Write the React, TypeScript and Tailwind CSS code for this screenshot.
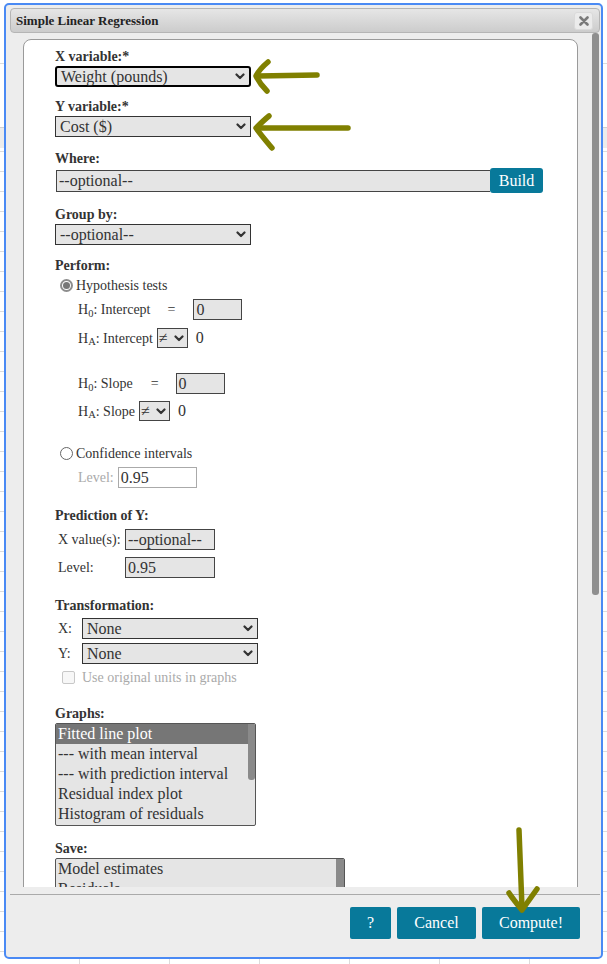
import React from "react";

function Chevron() {
  return (
    <svg width="10" height="7" viewBox="0 0 10 7" className="shrink-0">
      <path d="M1.5 1.5 L5 5 L8.5 1.5" fill="none" stroke="#333" strokeWidth="2.2" strokeLinecap="round" strokeLinejoin="round" />
    </svg>
  );
}

function Sel({ value, className }: { value: string; className: string }) {
  return (
    <div className={`flex items-center justify-between bg-[#e5e5e5] text-[16px] leading-[18px] text-[#333] pl-[4px] pr-[4px] ${className}`}>
      <span className="whitespace-nowrap">{value}</span>
      <Chevron />
    </div>
  );
}

function Label({ children, className = "" }: { children: React.ReactNode; className?: string }) {
  return <div className={`h-[16px] leading-[16px] text-[14px] font-bold text-[#333] ${className}`}>{children}</div>;
}

function Box({ value, className }: { value: string; className: string }) {
  return (
    <div className={`h-[21px] border bg-[#e5e5e5] border-[#444] text-[16px] leading-[19px] text-[#333] pl-[2px] whitespace-nowrap ${className}`}>
      {value}
    </div>
  );
}

function H({ s }: { s: string }) {
  return (
    <span>
      H<sub className="text-[10.5px]">{s}</sub>:
    </span>
  );
}

function NeqSel({ className }: { className: string }) {
  return (
    <div className={`flex items-center justify-between w-[31px] h-[20px] border border-[#444] bg-[#e5e5e5] text-[16px] text-[#333] pl-[1px] pr-[3px] ${className}`}>
      <span>≠</span>
      <Chevron />
    </div>
  );
}

function Radio({ checked }: { checked: boolean }) {
  return checked ? (
    <div className="w-[13px] h-[13px] rounded-full border-2 border-[#8d8d8d] bg-white flex items-center justify-center">
      <div className="w-[7px] h-[7px] rounded-full bg-[#777]" />
    </div>
  ) : (
    <div className="w-[13px] h-[13px] rounded-full border border-[#666] bg-white" />
  );
}

function Btn({ children, className = "" }: { children: React.ReactNode; className?: string }) {
  return (
    <div className={`h-[32px] flex items-center justify-center bg-[#08799a] text-white text-[16px] rounded-[2px] ${className}`}>
      {children}
    </div>
  );
}

export default function App() {
  return (
    <div className="relative w-[607px] h-[964px] overflow-hidden bg-white font-['Liberation_Serif','Times_New_Roman',serif]">
      {/* background page */}
      <div className="flex flex-col h-full">
        <div className="h-[64px] border-b border-[#dcdcdc]" />
        <div className="h-[64px] border-b border-[#d0d0d0]" />
        <div className="h-[20px] bg-[#ececec]" />
        <div className="flex-1 bg-[repeating-linear-gradient(180deg,transparent_0_3px,#dcdcdc_3px_4px,transparent_4px_20px)]">
          <div className="h-full bg-[repeating-linear-gradient(90deg,transparent_0_79px,#dcdcdc_79px_80px,transparent_80px_90px)]" />
        </div>
      </div>

      {/* dialog */}
      <div className="absolute left-[4px] top-[3px] w-[599px] h-[956px] border-2 border-[#4a8af4] rounded-[5px] bg-[#ededed] flex flex-col">
        {/* title bar */}
        <div className="mt-[3px] ml-[4px] mr-[1px] h-[25px] shrink-0 flex items-center justify-between border border-[#b5b5b5] rounded-[4px] bg-linear-to-b from-[#e6e6e6] to-[#cccccc] pl-[5px]">
          <span className="text-[13px] font-bold text-[#222]">Simple Linear Regression</span>
          <div className="mr-[6px] w-[19px] h-[18px] rounded-[3px] bg-[#ebebeb] border border-[#dadada] flex items-center justify-center">
            <svg width="10" height="10" viewBox="0 0 10 10">
              <path d="M1.5 1.5 L8.5 8.5 M8.5 1.5 L1.5 8.5" stroke="#7a7a7a" strokeWidth="2.6" strokeLinecap="round" />
            </svg>
          </div>
        </div>

        {/* scroll area */}
        <div className="relative h-[854px] shrink-0 overflow-hidden">
          <div className="absolute right-[2px] top-0 w-[7px] h-[562px] rounded-[3px] bg-[#8f8f8f]" />
          <div className="ml-[17px] mt-[6px] w-[555px] h-[1300px] border border-[#9a9a9a] rounded-t-[8px] bg-white pl-[31px] pt-[9px] text-[#333]">
            <Label>X variable:*</Label>
            <Sel value="Weight (pounds)" className="mt-[1px] w-[196px] h-[21px] border-2 border-black rounded-[3px]" />

            <Label className="mt-[12px]">Y variable:*</Label>
            <Sel value="Cost ($)" className="mt-[1px] w-[196px] h-[21px] border border-[#333]" />

            <Label className="mt-[14px]">Where:</Label>
            <div className="mt-[1px] flex items-center h-[25px]">
              <Box value="--optional--" className="ml-[1px] w-[434px] h-[22px] border-r-0" />
              <Btn className="w-[53px] !h-[25px] rounded-[3px]">Build</Btn>
            </div>

            <Label className="mt-[14px]">Group by:</Label>
            <Sel value="--optional--" className="mt-[1px] w-[196px] h-[21px] border border-[#333]" />

            <Label className="mt-[13px]">Perform:</Label>
            <div className="mt-[3px] h-[16px] flex items-center text-[14px] ml-[5px]">
              <Radio checked />
              <span className="ml-[3px]">Hypothesis tests</span>
            </div>

            <div className="mt-[6px] ml-[23px] h-[21px] flex items-center text-[14px]">
              <H s="0" />
              <span className="ml-[3.5px]">Intercept</span>
              <span className="ml-[17px]">=</span>
              <Box value="0" className="ml-[18px] w-[49px]" />
            </div>
            <div className="mt-[8px] ml-[23px] h-[20px] flex items-center text-[14px]">
              <H s="A" />
              <span className="ml-[3.5px]">Intercept</span>
              <NeqSel className="ml-[4px]" />
              <span className="ml-[8px] text-[16px]">0</span>
            </div>

            <div className="mt-[25px] ml-[23px] h-[21px] flex items-center text-[14px]">
              <H s="0" />
              <span className="ml-[3.5px]">Slope</span>
              <span className="ml-[18px]">=</span>
              <Box value="0" className="ml-[17px] w-[49px]" />
            </div>
            <div className="mt-[7px] ml-[23px] h-[20px] flex items-center text-[14px]">
              <H s="A" />
              <span className="ml-[3.5px]">Slope</span>
              <NeqSel className="ml-[4px]" />
              <span className="ml-[8px] text-[16px]">0</span>
            </div>

            <div className="mt-[24px] h-[16px] flex items-center text-[14px] ml-[5px]">
              <Radio checked={false} />
              <span className="ml-[3px]">Confidence intervals</span>
            </div>
            <div className="mt-[6px] ml-[23px] h-[21px] flex items-center text-[14px]">
              <span className="text-[#aaa]">Level:</span>
              <div className="ml-[4px] w-[79px] h-[21px] border border-[#aaa] bg-white text-[16px] leading-[19px] pl-[2px]">0.95</div>
            </div>

            <Label className="mt-[20px]">Prediction of Y:</Label>
            <div className="mt-[5px] ml-[3px] h-[21px] flex items-center text-[14px]">
              <span className="w-[67px]">X value(s):</span>
              <Box value="--optional--" className="w-[90px]" />
            </div>
            <div className="mt-[7px] ml-[3px] h-[21px] flex items-center text-[14px]">
              <span className="w-[67px]">Level:</span>
              <Box value="0.95" className="w-[90px]" />
            </div>

            <Label className="mt-[20px]">Transformation:</Label>
            <div className="mt-[4px] ml-[3px] h-[21px] flex items-center text-[14px]">
              <span className="w-[24px]">X:</span>
              <Sel value="None" className="w-[176px] h-[21px] border border-[#333]" />
            </div>
            <div className="mt-[4px] ml-[3px] h-[21px] flex items-center text-[14px]">
              <span className="w-[24px]">Y:</span>
              <Sel value="None" className="w-[176px] h-[21px] border border-[#333]" />
            </div>
            <div className="mt-[5px] ml-[7px] h-[16px] flex items-center text-[14px] text-[#aaa]">
              <div className="w-[13px] h-[13px] rounded-[2px] border border-[#c8c8c8] bg-[#f7f7f7]" />
              <span className="ml-[7px]">Use original units in graphs</span>
            </div>

            <Label className="mt-[21px]">Graphs:</Label>
            <div className="mt-[1px] w-[201px] h-[103px] border border-[#555] rounded-[2px] bg-[#e5e5e5] flex overflow-hidden">
              <div className="flex-1 text-[16px] leading-[20px]">
                <div className="h-[20px] bg-[#767676] text-white pl-[2px] whitespace-nowrap">Fitted line plot</div>
                <div className="h-[20px] pl-[2px] whitespace-nowrap">--- with mean interval</div>
                <div className="h-[20px] pl-[2px] whitespace-nowrap">--- with prediction interval</div>
                <div className="h-[20px] pl-[2px] whitespace-nowrap">Residual index plot</div>
                <div className="h-[20px] pl-[2px] whitespace-nowrap">Histogram of residuals</div>
              </div>
              <div className="w-[7px] shrink-0">
                <div className="h-[56px] rounded-b-[3px] bg-[#8a8a8a]" />
              </div>
            </div>

            <Label className="mt-[15px]">Save:</Label>
            <div className="mt-[1px] w-[290px] h-[103px] border border-[#555] rounded-[2px] bg-[#e5e5e5] flex overflow-hidden">
              <div className="flex-1 text-[16px] leading-[20px]">
                <div className="h-[20px] pl-[2px] whitespace-nowrap">Model estimates</div>
                <div className="h-[20px] pl-[2px] whitespace-nowrap">Residuals</div>
              </div>
              <div className="w-[8px] shrink-0">
                <div className="h-[70px] rounded-b-[3px] bg-[#8a8a8a]" />
              </div>
            </div>
          </div>
        </div>

        {/* footer */}
        <div className="mt-[7px] ml-[4px] mr-[1px] border-t border-[#aaa]" />
        <div className="mt-[12px] flex justify-end gap-[6px] pr-[21px]">
          <Btn className="w-[41px]">?</Btn>
          <Btn className="w-[79px]">Cancel</Btn>
          <Btn className="w-[98px]">Compute!</Btn>
        </div>
      </div>

      {/* hand-drawn annotation arrows */}
      <svg className="absolute left-0 top-0 pointer-events-none" width="607" height="964" viewBox="0 0 607 964">
        <g fill="none" stroke="#808000" strokeWidth="5.5" strokeLinecap="round" strokeLinejoin="round">
          <path d="M258 76 L317 75" />
          <path d="M268 62 C262 67 258 72 256 76 C259 82 263 87 267 91" />
          <path d="M259 128 L348 128" />
          <path d="M269 116 C264 120 259 125 256 128 C261 135 267 142 272 148" />
          <path d="M519 830 C520 858 521 885 522 908" />
          <path d="M509 893 C513 899 518 905 522 910 C527 903 532 896 537 889" />
        </g>
      </svg>
    </div>
  );
}
